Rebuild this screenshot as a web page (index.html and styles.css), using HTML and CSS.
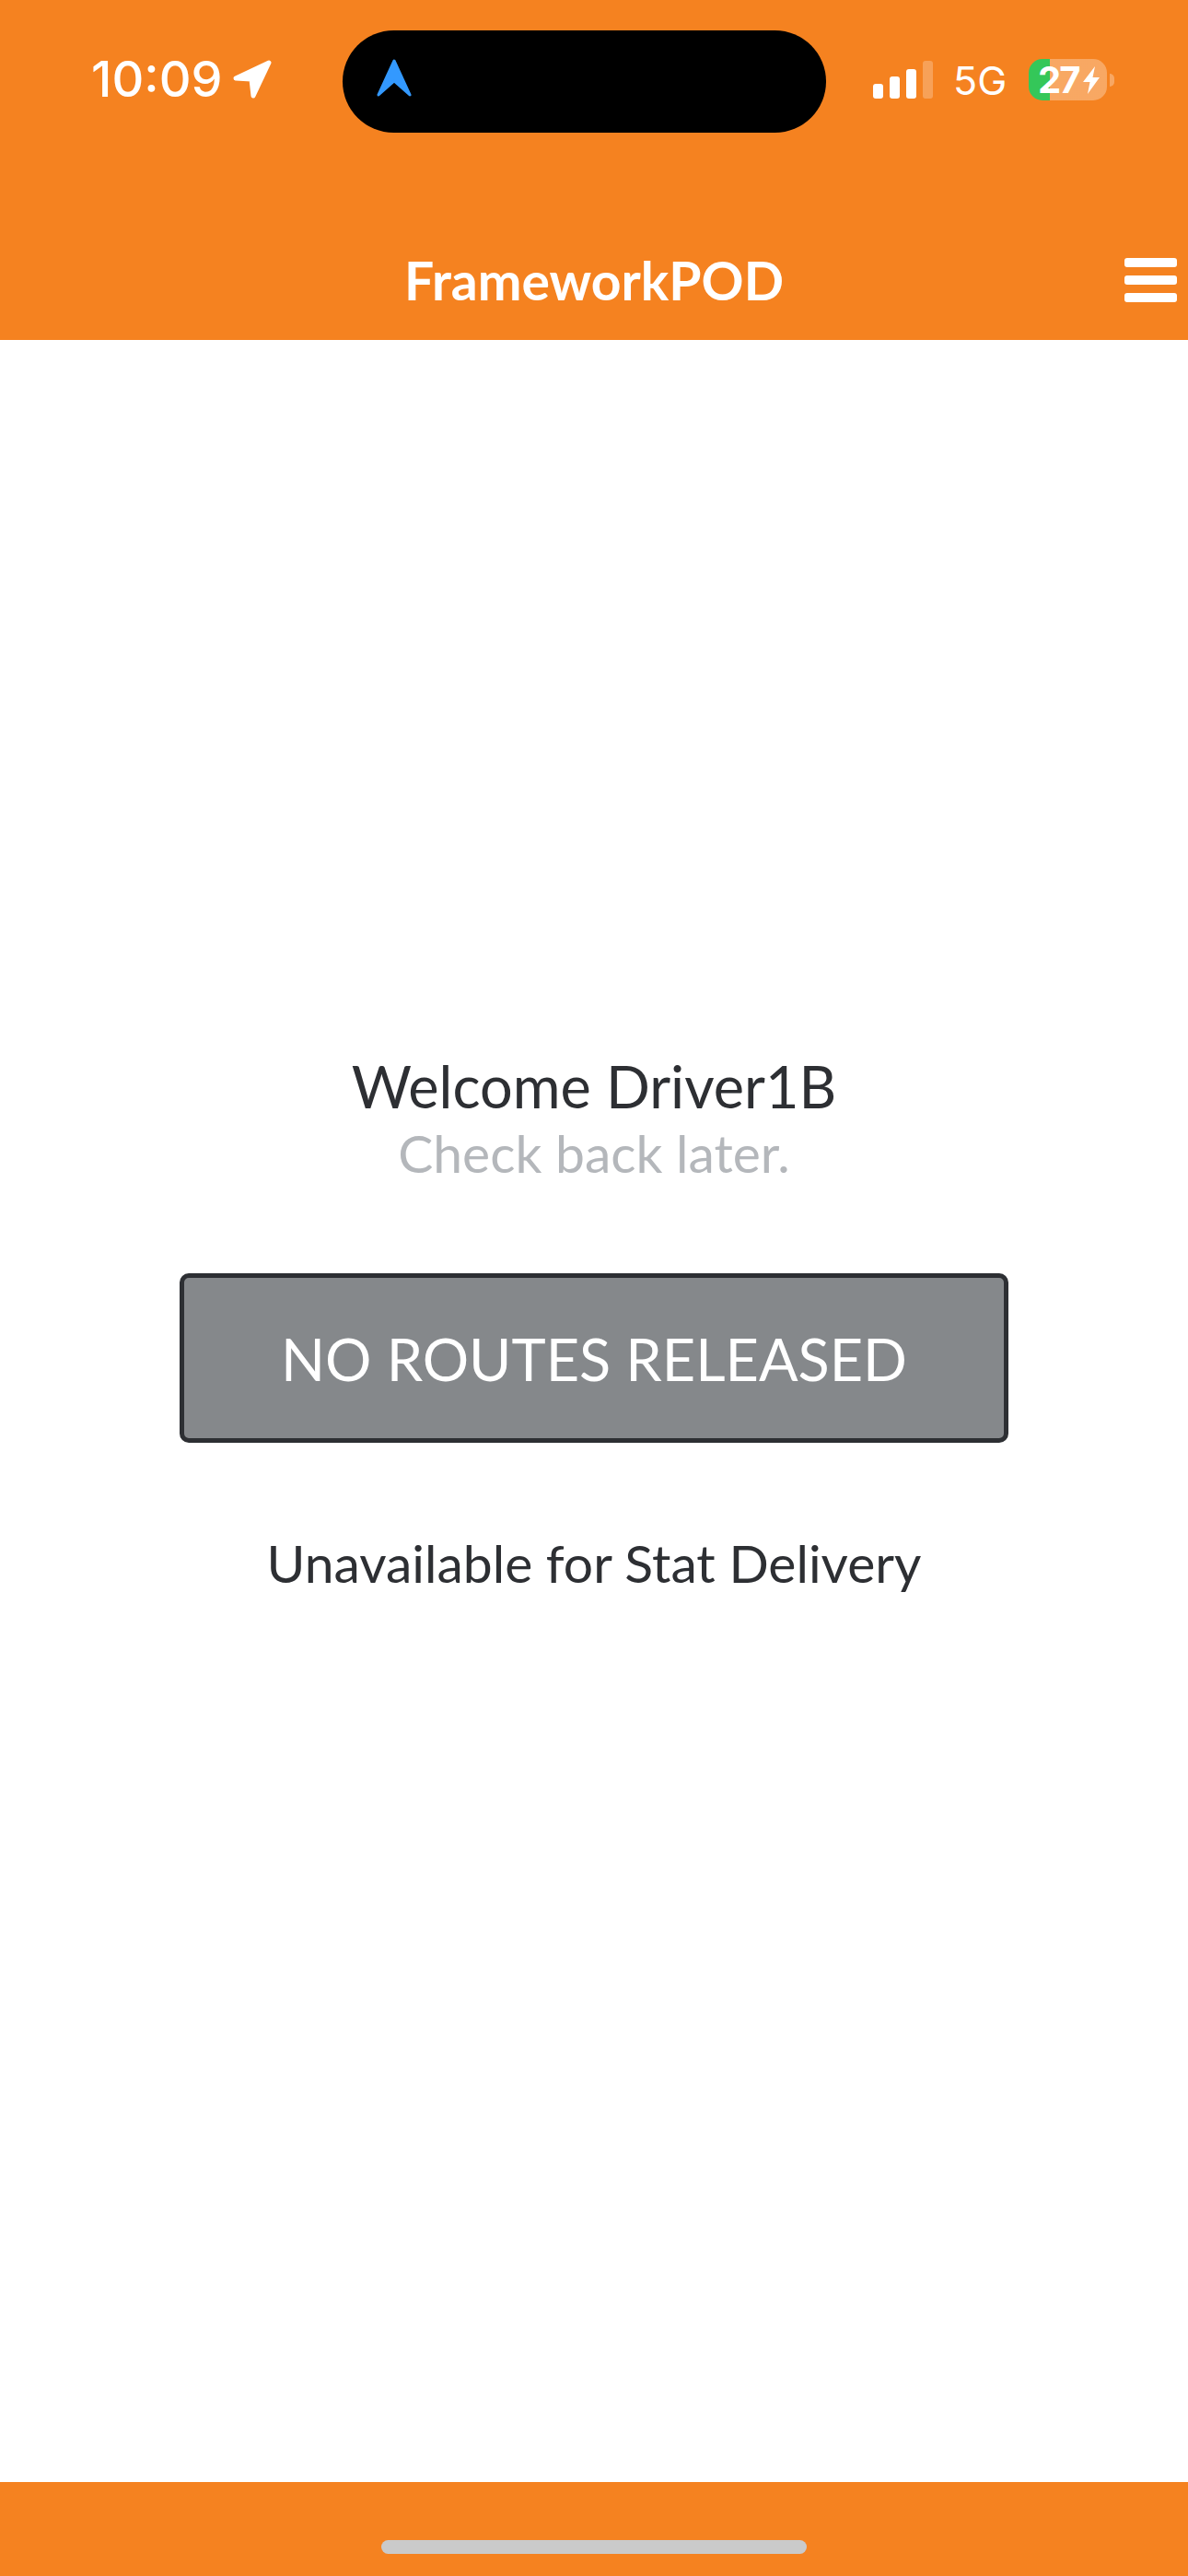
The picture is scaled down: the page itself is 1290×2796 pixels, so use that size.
FILE: index.html
```html
<!DOCTYPE html>
<html lang="en">
	<head>
		<meta charset="UTF-8" />
		<meta name="viewport" content="width=device-width, initial-scale=1.0" />
		<title>FrameworkPOD</title>
		<link rel="stylesheet" href="styles.css">
	</head>
	<body>
		<header class="app-header">
			<div class="status-bar">
				<div class="status-time">
					<span class="time-text">10:09</span>
					<svg class="location-icon" viewBox="0 0 42 42">
						<path d="M3 20 L39 3 L22 39 L20 21 Z" />
					</svg>
				</div>
				<div class="island">
					<svg class="nav-icon" viewBox="0 0 38 41">
						<path d="M19 2 L36 39 L19 24 L2 39 Z" />
					</svg>
				</div>
				<div class="status-right">
					<div class="signal">
						<span class="bar bar-1"></span>
						<span class="bar bar-2"></span>
						<span class="bar bar-3"></span>
						<span class="bar bar-4"></span>
					</div>
					<span class="network">5G</span>
					<div class="battery">
						<span class="battery-level">27</span>
						<svg class="bolt-icon" viewBox="0 0 18 30">
							<path d="M13 0 L0 17 L7.5 17 L5 30 L18 12 L10.5 12 Z" />
						</svg>
					</div>
					<span class="battery-nub"></span>
				</div>
			</div>
			<nav class="navbar">
				<span class="nav-side"></span>
				<span class="nav-title">FrameworkPOD</span>
				<div class="nav-side">
					<button class="menu-button" aria-label="Menu">
						<span></span>
						<span></span>
						<span></span>
					</button>
				</div>
			</nav>
		</header>

		<main class="content">
			<h1 class="welcome">Welcome Driver1B</h1>
			<p class="subtitle">Check back later.</p>
			<button class="routes-button" disabled>NO ROUTES RELEASED</button>
			<p class="stat-status">Unavailable for Stat Delivery</p>
		</main>

		<footer class="app-footer">
			<span class="home-indicator"></span>
		</footer>
	</body>
</html>
```

FILE: styles.css
```css
body {
	margin: 0;
	height: 2796px;
	display: flex;
	flex-direction: column;
	font-family: 'Lato', sans-serif;
	background-color: white;
	color: #2d2f33;
}
.app-header {
	background-color: #f58220;
	height: 369px;
	color: white;
}
.status-bar {
	display: flex;
	align-items: flex-start;
	height: 144px;
	padding-top: 33px;
	box-sizing: border-box;
	font-family: 'Inter', sans-serif;
}
.status-time {
	display: flex;
	align-items: center;
	width: 372px;
	height: 111px;
	padding-left: 99px;
	padding-bottom: 6px;
	box-sizing: border-box;
}
.time-text {
	font-size: 54px;
	font-weight: 500;
	line-height: 1;
}
.location-icon {
	width: 42px;
	height: 42px;
	margin-left: 11px;
}
.location-icon path {
	fill: white;
	stroke: white;
	stroke-width: 5;
	stroke-linejoin: round;
}
.island {
	display: flex;
	align-items: center;
	width: 525px;
	height: 111px;
	padding-left: 37px;
	padding-bottom: 8px;
	box-sizing: border-box;
	background-color: black;
	border-radius: 56px;
}
.nav-icon {
	width: 38px;
	height: 41px;
}
.nav-icon path {
	fill: #3399ff;
	stroke: #3399ff;
	stroke-width: 3;
	stroke-linejoin: round;
}
.status-right {
	display: flex;
	align-items: flex-start;
	padding-left: 51px;
	padding-top: 31px;
}
.signal {
	display: flex;
	align-items: flex-end;
	gap: 7px;
	height: 41px;
	margin-top: 2px;
}
.bar {
	width: 11px;
	background-color: white;
	border-radius: 3px;
}
.bar-1 {
	height: 16px;
}
.bar-2 {
	height: 24px;
}
.bar-3 {
	height: 32px;
}
.bar-4 {
	height: 41px;
	opacity: 0.25;
}
.network {
	width: 82px;
	margin-left: 22px;
	margin-top: 2px;
	font-size: 43px;
	line-height: 43px;
}
.battery {
	display: flex;
	align-items: center;
	width: 85px;
	height: 45px;
	padding-left: 10px;
	box-sizing: border-box;
	border-radius: 15px;
	background: linear-gradient(to right, #34c759 23px, rgba(255, 255, 255, 0.3) 23px);
}
.battery-level {
	font-size: 40px;
	font-weight: 700;
	line-height: 45px;
	letter-spacing: -2px;
}
.bolt-icon {
	width: 18px;
	height: 30px;
	margin-left: 5px;
}
.bolt-icon path {
	fill: white;
}
.battery-nub {
	width: 5px;
	height: 14px;
	margin-left: 3px;
	margin-top: 16px;
	background-color: rgba(255, 255, 255, 0.3);
	border-radius: 0 5px 5px 0;
}
.navbar {
	display: grid;
	grid-template-columns: 1fr auto 1fr;
	align-items: center;
	height: 225px;
	padding: 95px 12px 0;
	box-sizing: border-box;
}
.nav-title {
	font-size: 57px;
	font-weight: 700;
}
.nav-side {
	display: flex;
	justify-content: flex-end;
}
.menu-button {
	display: flex;
	flex-direction: column;
	gap: 9px;
	padding: 0;
	margin-top: 3px;
	margin-bottom: 4px;
	background: none;
	border: none;
}
.menu-button span {
	width: 57px;
	height: 10px;
	background-color: white;
	border-radius: 3px;
}
.content {
	flex: 1;
	display: flex;
	flex-direction: column;
	align-items: center;
	padding-top: 774px;
	text-align: center;
}
.welcome {
	margin: 0;
	font-size: 63px;
	font-weight: 400;
	line-height: 72px;
}
.subtitle {
	margin: 0;
	font-size: 57px;
	line-height: 72px;
	color: #b4b7bb;
}
.routes-button {
	width: 900px;
	height: 184px;
	margin-top: 95px;
	background-color: #85888b;
	border: 5px solid #2d2f33;
	border-radius: 10px;
	color: white;
	font-family: 'Lato', sans-serif;
	font-size: 63px;
}
.stat-status {
	margin: 94px 0 0;
	font-size: 57px;
	line-height: 72px;
}
.app-footer {
	display: flex;
	justify-content: center;
	height: 102px;
	background-color: #f58220;
}
.home-indicator {
	width: 462px;
	height: 15px;
	margin-top: 63px;
	background-color: #cacaca;
	border-radius: 8px;
}
```
